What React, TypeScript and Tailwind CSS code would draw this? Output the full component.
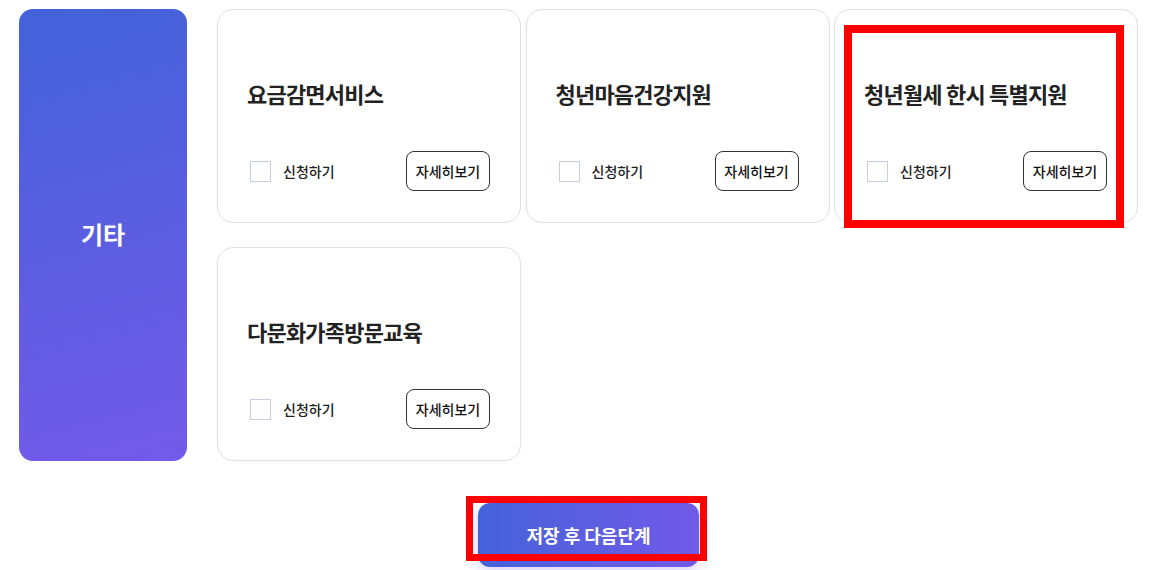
import React from "react";

const cards = [
  "요금감면서비스",
  "청년마음건강지원",
  "청년월세 한시 특별지원",
  "다문화가족방문교육",
];

function Card({ title }: { title: string }) {
  return (
    <div className="h-[214px] rounded-[16px] border border-[#dfe1e6] bg-white flex flex-col justify-between pl-[29px] pr-[30px] pt-[69px] pb-[31px]">
      <div className="text-[22px] leading-[28px] font-bold text-[#222222] tracking-[-0.8px]">{title}</div>
      <div className="flex items-center justify-between">
        <label className="flex items-center">
          <span className="ml-[3px] w-[21px] h-[21px] border border-[#c5cde0] bg-white" />
          <span className="ml-[12px] text-[14px] font-medium text-[#222222]">신청하기</span>
        </label>
        <button className="w-[84px] h-[40px] rounded-[8px] border border-[#333333] bg-white text-[14px] font-medium text-[#111111]">
          자세히보기
        </button>
      </div>
    </div>
  );
}

export default function App() {
  return (
    <div
      className="relative w-[1176px] h-[570px] overflow-hidden bg-white"
      style={{ fontFamily: '"Noto Sans CJK KR", "Noto Sans", sans-serif' }}
    >
      <div className="flex gap-[30px] pl-[19px] pt-[9px]">
        <div className="w-[168px] h-[452px] rounded-[14px] bg-[linear-gradient(165deg,#4262d9,#745ae9)] flex items-center justify-center pb-[2px]">
          <span className="text-[24px] font-bold text-white">기타</span>
        </div>
        <div className="grid grid-cols-[304px_304px_304px] gap-x-[4.5px] gap-y-[24px] content-start">
          {cards.map((c) => (
            <Card key={c} title={c} />
          ))}
        </div>
      </div>
      <div className="flex justify-center mt-[42px] pl-[1px]">
        <button className="w-[221px] h-[64px] rounded-[12px] bg-gradient-to-r from-[#4362d9] to-[#715ae9] text-white text-[18px] font-bold shadow-[0_4px_16px_rgba(110,90,233,0.3)]">
          저장 후 다음단계
        </button>
      </div>
      <div className="absolute left-[844px] top-[25px] w-[280px] h-[203px] border-[8px] border-[#ff0000]" />
      <div className="absolute left-[466px] top-[496px] w-[241px] h-[65px] border-[7px] border-[#ff0000]" />
    </div>
  );
}
